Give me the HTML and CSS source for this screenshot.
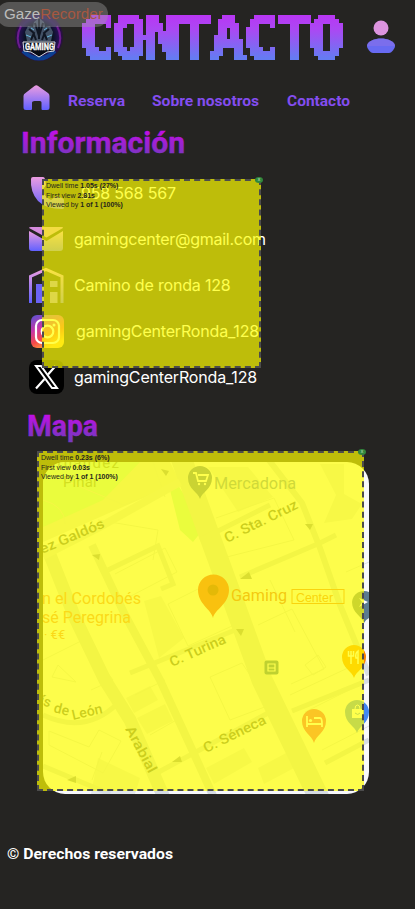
FILE: index.html
```html
<!DOCTYPE html>
<html lang="es">
<head>
<meta charset="utf-8">
<title>Contacto</title>
<link rel="stylesheet" href="styles.css">
</head>
<body>
<svg class="defs" width="0" height="0" aria-hidden="true">
  <defs>
    <linearGradient id="title" x1="0" y1="15" x2="0" y2="58" gradientUnits="userSpaceOnUse"><stop offset="0" stop-color="#b936f4"/><stop offset=".35" stop-color="#aa49f3"/><stop offset="1" stop-color="#657bf2"/></linearGradient>
    <linearGradient id="head" x1="0" y1="0" x2="0" y2="1"><stop offset=".15" stop-color="#c10fe6"/><stop offset=".9" stop-color="#7638bd"/></linearGradient>
    <linearGradient id="icon" x1="0" y1="0" x2="0" y2="1"><stop offset="0" stop-color="#eb9ce0"/><stop offset="1" stop-color="#6060ff"/></linearGradient>
    <linearGradient id="insta" x1="0" y1="0" x2=".55" y2="1"><stop offset="0" stop-color="#5555d5"/><stop offset=".4" stop-color="#c735a7"/><stop offset=".7" stop-color="#f64b48"/><stop offset="1" stop-color="#ffb63c"/></linearGradient>
    <radialGradient id="halo"><stop offset=".55" stop-color="#06121e"/><stop offset=".82" stop-color="#251252"/><stop offset="1" stop-color="#29113a"/></radialGradient>
    <filter id="pixel" x="76" y="10" width="272" height="52" filterUnits="userSpaceOnUse" color-interpolation-filters="sRGB">
      <feComponentTransfer in="SourceGraphic" result="solid"><feFuncA type="linear" slope="20" intercept="-9"/></feComponentTransfer>
      <feFlood x="80" y="17" width="1" height="1" flood-color="#000" result="dot"/>
      <feOffset in="dot" x="78" y="15" width="4" height="4" result="cell"/>
      <feTile in="cell" result="grid"/>
      <feComposite in="solid" in2="grid" operator="in"/>
      <feMorphology operator="dilate" radius="2"/>
      <feComponentTransfer><feFuncA type="linear" slope="20" intercept="0"/></feComponentTransfer>
    </filter>
    <mask id="title-mask" x="76" y="10" width="272" height="52" maskUnits="userSpaceOnUse" mask-type="alpha" style="mask-type:alpha"><text x="79" y="57.500" textLength="265" class="title-text" filter="url(#pixel)">CONTACTO</text></mask>
  </defs>
</svg>

<header class="header">
  <svg class="logo" viewBox="15 12 50 50">
    <circle cx="39" cy="37" r="24" fill="url(#halo)"/>
    <path d="M20 48q-5-11 1-22M58 48q5-11-1-22" fill="none" stroke="#6d1b8f" stroke-width="2"/>
    <path d="M23 51q16 15 32 0" fill="none" stroke="#0b3f91" stroke-width="4"/>
    <path d="M39 18l5 4 1 5 5-1 3 6-2 9H27l-2-9 3-6 5 1 1-5z" fill="#435166"/>
    <path d="M29 29l5 4-3 7M49 29l-5 4 3 7M35 23l4 13 4-13M39 19v20M33 32l3 8M45 32l-3 8" fill="none" stroke="#101623" stroke-width="2"/>
    <path d="M26 35l5 2M52 35l-5 2M31 28l3 2M47 28l-3 2" stroke="#65b9de"/>
    <path d="M23 42h32l-1 9-7 1-8 5-8-5-7-1z" fill="#080c15" stroke="#d8dce6"/>
    <text x="25" y="50" textLength="29" lengthAdjust="spacingAndGlyphs" class="logo-text">GAMING</text>
  </svg>
  <svg class="title" viewBox="76 10 272 52" role="img" aria-label="CONTACTO"><rect x="76" y="10" width="272" height="52" fill="url(#title)" mask="url(#title-mask)"/></svg>
  <svg class="user" viewBox="366 19 30 36"><circle cx="381" cy="28" r="7.500" fill="#dc94df"/><path d="M367 46c0-5 8-7.500 14-7.500s14 2.500 14 7.500c0 2-3 7-6 7h-16c-3 0-6-5-6-7z" fill="#686af2"/><path d="M367 46c0-5 8-7.500 14-7.500s14 2.500 14 7.500z" fill="#8872e8" opacity=".6"/></svg>
</header>

<nav class="nav">
  <svg class="home" viewBox="0 0 27 26"><path d="M2.500 8.500L11.500 1.500q1.800-1.400 3.600 0L25 8.500q1.500 1 1.500 3V23q0 2.500-2.500 2.500h-4.500q-1 0-1-1V18q0-1.500-1.500-1.500h-5.500Q9 16.500 9 18v6.500q0 1-1 1H3Q.5 25.500.5 23V11.500q0-2 2-3z" fill="url(#icon)"/></svg>
  <svg class="nav-link reserva" viewBox="0 0 60 20"><text x="0" y="15.500" textLength="57" lengthAdjust="spacingAndGlyphs">Reserva</text></svg>
  <svg class="nav-link sobre" viewBox="0 0 110 20"><text x="0" y="15.500" textLength="107" lengthAdjust="spacingAndGlyphs">Sobre nosotros</text></svg>
  <svg class="nav-link contacto" viewBox="0 0 66 20"><text x="0" y="15.500" textLength="63" lengthAdjust="spacingAndGlyphs">Contacto</text></svg>
</nav>

<main>
  <svg class="heading info-heading" viewBox="0 0 166 34"><text x="0" y="27" textLength="164" lengthAdjust="spacingAndGlyphs">Información</text></svg>

  <section class="info">
    <ul class="contacts">
      <li><svg viewBox="0 0 36 36"><path d="M5 2h10q1.500 0 2 2l1 6-4 6q3 6 9 9l5-4 6 2q2 .5 2 2v8q0 1-2 1Q18 34 10 26 2 17 3 4q0-2 2-2z" fill="url(#icon)"/></svg><span class="phone">958 568 567</span></li>
      <li><svg viewBox="0 0 36 36"><path d="M3 6h31q1 0 1 1L18.500 16.500 1 7q0-1 2-1z" fill="#d58bdc"/><path d="M1 10l17.500 10L35 10v17q0 3-3 3H4q-3 0-3-3z" fill="url(#icon)"/></svg><span class="mail">gamingcenter@gmail.com</span></li>
      <li><svg viewBox="0 0 36 36"><path d="M2.500 36V9.500L18 2.500l16 7V36" fill="none" stroke="url(#icon)" stroke-width="3"/><path d="M8 17h8v19H8z" fill="#6b63f5"/><path d="M22 14h7.500v6H22zM22 25h7.500v11H22z" fill="#927be9"/></svg><span class="street">Camino de ronda 128</span></li>
      <li><svg viewBox="0 0 36 36"><rect x="3" y="2" width="33" height="33" rx="6" fill="url(#insta)"/><rect x="8" y="7" width="23" height="23" rx="6" fill="none" stroke="#fff" stroke-width="2.200"/><circle cx="19.500" cy="18.500" r="5.800" fill="none" stroke="#fff" stroke-width="2.200"/><circle cx="26" cy="12" r="1.500" fill="#fff"/></svg><span class="insta">gamingCenterRonda_128</span></li>
      <li><svg viewBox="0 0 36 36"><rect x="1" y="1" width="35" height="34" rx="8" fill="#000"/><path d="M8 7h5l16 22h-5z" fill="none" stroke="#fff" stroke-width="2"/><path d="M27.500 7L20 15.500M16.500 20L8 29.500" stroke="#fff" stroke-width="2.200"/></svg><span class="x-name">gamingCenterRonda_128</span></li>
    </ul>
    <div class="heat heat-info">
      <p>Dwell time <b>1.05s (27%)</b></p><p>First view <b>2.81s</b></p><p>Viewed by <b>1 of 1 (100%)</b></p>
      <i class="close">x</i>
    </div>
  </section>

  <svg class="heading map-heading" viewBox="0 0 74 34"><text x="0" y="27" textLength="71" lengthAdjust="spacingAndGlyphs">Mapa</text></svg>

  <section class="map-section">
    <svg class="map" viewBox="43 462 326 332">
      <rect x="43" y="462" width="326" height="332" fill="#f8f9fb"/>
      <path d="M43 462h120l42 65-12 15-13-12-12-48-62 29-63 29z" fill="#b9f3cb"/>
      <path d="M140 462h30l10 20-80 35-57 25v-15l60-27z" fill="#dfe4df"/>
      <g fill="#e3e7ec">
        <path d="M208 467h40l25 30-35 15zM320 464h24v30l18 10-10 15-28 4 12-28zM144 601l17-5 23 42-25 20zM126 698l24-12 8 14-24 13zM137 718l28-14 8 17-26 13zM98 758l42 20-5 16h-44zM206 768l38-20 8 14-38 22zM258 768l30-16 8 15-32 17z"/>
      </g>
      <g fill="none" stroke="#dce1e4">
        <path d="M43 500q22 6 22 24M64 480l60 25 30-12M153 462l12 35M98 520l60 10-5 30M115 574l50-26 12 24-48 25M168 604l30-15M168 604l20 42 55-25M215 560l79-20-20-42-58 20M43 660l40-20 30 40-22 10M49 731l40 16 10-17 22 11-18 32-54-28zM102 752l-10 28M58 665l18 17-24-5zM135 695l30-15M150 735l30-17M210 677l32-14 28 42-40 15zM258 625l34-16 32 60-33 15M290 695l75-35M305 712l60-30M322 750l47-24M346 572l23-10M270 580l25 52M305 665l13-10 8 12-13 8z"/>
      </g>
      <g fill="none" stroke="#d6dce3">
        <path d="M180 455L222 570 262 680 320 800" stroke-width="21"/>
        <path d="M265 455L302 503 320 548 340 605 369 675" stroke-width="6"/>
        <path d="M240 577L320 543 336 535M200 540L270 505M130 673L240 628M155 774L270 712M292 711L369 680M325 763L369 740M43 766L110 794" stroke-width="5"/>
        <path d="M48 550L75 618 105 680 130 720 165 800" stroke-width="13"/>
        <path d="M92 545L125 615 160 680 190 745 215 800" stroke-width="8"/>
        <path d="M43 715q43 20 75-12M108 570l50-24 15 38-12 5" stroke-width="5"/>
      </g>
      <path d="M43 556L98 528 180 482" fill="none" stroke="#e1e5e8" stroke-width="8"/>
      <g fill="#8892a0"><path d="M240 579l9-7 3 7zM305 524h8l-3 6zM92 555l8-1-1 6zM236 629h8l-3 7zM172 762l8-6 2 6zM67 780l9-4v7zM161 469l8 2-3 5z"/></g>

      <g class="street-name">
        <text transform="translate(42 554) rotate(-23)" textLength="69" lengthAdjust="spacingAndGlyphs">ez Galdós</text>
        <text transform="translate(227 543) rotate(-26)" textLength="80" lengthAdjust="spacingAndGlyphs">C. Sta. Cruz</text>
        <text transform="translate(172 667) rotate(-24)" textLength="60" lengthAdjust="spacingAndGlyphs">C. Turina</text>
        <text transform="translate(206 753) rotate(-26)" textLength="68" lengthAdjust="spacingAndGlyphs">C. Séneca</text>
        <text transform="translate(125 729) rotate(62)" textLength="51" lengthAdjust="spacingAndGlyphs">Arabial</text>
        <text transform="translate(39 704) rotate(18)">ís</text><text transform="translate(53 712) rotate(14)">de</text><text transform="translate(73 720) rotate(-13)">León</text>
      </g>
      <g class="area-name"><text x="48" y="468" textLength="71">ernández</text><text x="63" y="487" textLength="35">Pinar</text></g>
      <g class="place"><text x="42" y="604" textLength="99" lengthAdjust="spacingAndGlyphs">n el Cordobés</text><text x="42" y="623" textLength="89" lengthAdjust="spacingAndGlyphs">sé Peregrina</text><text x="44" y="639" class="price">· €€</text></g>
      <text x="214" y="489" class="shop-name" textLength="82" lengthAdjust="spacingAndGlyphs">Mercadona</text>
      <text x="231" y="601" class="gaming" textLength="56" lengthAdjust="spacingAndGlyphs">Gaming</text>
      <rect x="292" y="589.500" width="52" height="14" fill="none" stroke="#e9702c"/>
      <text x="296" y="602" class="center" textLength="37" lengthAdjust="spacingAndGlyphs">Center</text>

      <path d="M200 499c-2-7-12-10-12-21a12 12 0 0124 0c0 11-10 14-12 21z" fill="#4f6ca8"/>
      <path d="M193 473h3l2 8h8l2-6h-10" fill="none" stroke="#fff" stroke-width="1.800"/><circle cx="199" cy="484" r="1.200" fill="#fff"/><circle cx="205" cy="484" r="1.200" fill="#fff"/>
      <path d="M213 618c-2-9-15-14-15-28a15.500 15.500 0 0131 0c0 14-14 19-16 28z" fill="#ea3035"/><circle cx="213" cy="590" r="5.500" fill="#a61518"/>
      <path d="M314 743c-2-8-12-11-12-22a12 12 0 0124 0c0 11-10 14-12 22z" fill="#f03c78"/><path d="M307 716v11M307 724h15v3M314 718h6q2 0 2 6" fill="none" stroke="#fff" stroke-width="1.800"/><circle cx="310.500" cy="720.500" r="1.600" fill="#fff"/>
      <path d="M354 678c-2-7-12-10-12-21a12 12 0 0124 0c0 11-10 14-12 21z" fill="#fb8200"/><path d="M351 651v13M348.500 651v5h5v-5M358 664v-13q-3 2-2 7h2" fill="none" stroke="#fff" stroke-width="1.500"/>
      <path d="M357 733c-2-7-12-10-12-21a12 12 0 0124 0c0 11-10 14-12 21z" fill="#4388f2"/><path d="M352 709h11v9h-11z" fill="#fff"/><path d="M355 709q0-4 2.500-4t2.500 4" fill="none" stroke="#fff"/><path d="M355 713q3 3 5 0" fill="none" stroke="#4388f2"/>
      <path d="M364 623c-2-7-12-10-12-21a12 12 0 0117-10v26q-4 2-5 5z" fill="#5b7b90"/><path d="M359 598l9 4-9 5 3-5z" fill="#fff"/>
      <rect x="264.500" y="660.500" width="14" height="14" rx="2" fill="#2864a0"/><path d="M268 664h7v7h-7zM268 668h7" fill="none" stroke="#fff" stroke-width="1.200"/>
    </svg>
    <div class="heat heat-map">
      <p>Dwell time <b>0.23s (6%)</b></p><p>First view <b>0.03s</b></p><p>Viewed by <b>1 of 1 (100%)</b></p>
      <i class="close">x</i>
    </div>
  </section>
</main>

<footer class="footer"><svg viewBox="0 0 170 20"><text x="0" y="14.500" textLength="166" lengthAdjust="spacingAndGlyphs">© Derechos reservados</text></svg></footer>

<div class="watermark">Gaze<span>Recorder</span></div>
</body>
</html>
```

FILE: styles.css
```css
* { box-sizing: border-box; }
html, body { margin: 0; }
body { width: 415px; height: 909px; overflow: hidden; position: relative; background: #252422; color: #fff; font-family: Inter, sans-serif; }
svg { display: block; flex: none; }
.defs { position: absolute; }

.header { display: flex; height: 72px; padding: 10px 0 0 15px; }
.logo { width: 50px; height: 50px; margin-top: 2px; }
.logo-text { font: 700 9px Roboto, sans-serif; fill: #fff; stroke: #fff; stroke-width: .3; }
.title { width: 272px; height: 52px; margin-left: 11px; }
.title-text { font: 700 58px "DejaVu Sans Mono", monospace; fill: #fff; stroke: #fff; stroke-width: 1; }
.user { width: 30px; height: 36px; margin: 9px 0 0 18px; }

.nav { display: flex; height: 52px; padding: 12px 0 0 23px; }
.home { width: 27px; height: 27px; }
.nav-link { height: 20px; margin-top: 6px; overflow: visible; }
.nav-link text { font: 700 15px Roboto, sans-serif; fill: #844df0; }
.reserva { width: 60px; margin-left: 18px; }
.sobre { width: 110px; margin-left: 24px; }
.contacto { width: 66px; margin-left: 25px; }

.heading text { font: 700 29px Roboto, sans-serif; fill: url(#head); stroke: url(#head); stroke-width: .4; }
.info-heading { width: 166px; height: 34px; margin: 2px 0 0 21px; }
.info { position: relative; height: 243px; padding: 13px 0 0 28px; }
.contacts { list-style: none; margin: 0; padding: 0; }
.contacts li { display: flex; align-items: center; height: 46px; padding-bottom: 6px; font-size: 16px; letter-spacing: -.18px; white-space: nowrap; }
.contacts svg { width: 36px; height: 36px; }
.contacts span { margin-left: 10px; }
.contacts .phone { margin-left: 17px; }
.contacts .insta { margin-left: 12px; }
.contacts .mail { letter-spacing: -.27px; }

.heat { position: absolute; background: rgba(255, 255, 0, .7); color: #25251a; font: 7px/9.700px "Liberation Sans", sans-serif; padding: 0 0 0 2px; border: 2px dashed #4c4c4c; }
.heat p { margin: 0; }
.heat-info { left: 42px; top: 19px; width: 219px; height: 189px; }
.heat-map { left: 37px; top: 0; width: 327px; height: 340px; }
.close { position: absolute; right: -4px; top: -4px; width: 8px; height: 6px; border-radius: 50%; background: #31883d; color: #c4e5c8; font: 5px/5px "Liberation Sans", sans-serif; text-align: center; }

.map-heading { width: 74px; height: 34px; margin: 6px 0 0 27px; }
.map-section { position: relative; height: 344px; margin-top: 8px; padding: 11px 0 0 43px; }
.map { width: 326px; height: 332px; border-radius: 22px; }
.map text { font-family: Roboto, sans-serif; }
.street-name text { font-size: 14px; font-weight: 500; fill: #525a65; }
.area-name text { font-size: 15px; fill: #68956f; }
.place text { font-size: 16.5px; fill: #ef8054; }
.place .price { font-size: 13px; }
.shop-name { font-size: 16px; fill: #6080c0; }
.gaming { font-size: 17px; fill: #d84a3a; }
.map .center { font: 13px "Liberation Sans", sans-serif; fill: #e9702c; }

.footer { padding: 49px 0 0 7px; }
.footer svg { width: 170px; height: 20px; }
.footer text { font: 700 15px Roboto, sans-serif; fill: #fff; }

.watermark { position: absolute; left: -3px; top: 2px; width: 111px; height: 25px; padding-left: 7px; border-radius: 12px; background: rgba(160, 160, 160, .4); color: #bcbcbc; font: 15.2px/24px "Liberation Sans", sans-serif; }
.watermark span { color: #a75841; }
```
